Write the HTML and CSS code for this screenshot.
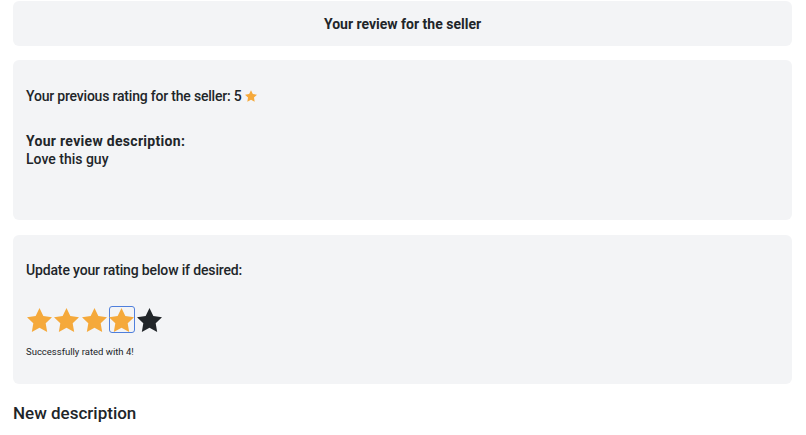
FILE: index.html
```html
<!DOCTYPE html>
<html>
<head>
<meta charset="utf-8">
<link rel="stylesheet" href="styles.css">
</head>
<body>
<div class="page">
  <div class="box header">Your review for the seller</div>
  <div class="box prev">
    <p class="prev-rating">Your previous rating for the seller: 5 <svg class="mini-star" viewBox="1.9 1.8 20.2 19.3"><path d="M12 1.8l3.1 6.4 7 1-5.1 4.9 1.2 7L12 17.8l-6.2 3.3 1.2-7L1.9 9.2l7-1z"/></svg></p>
    <p class="desc-label">Your review description:</p>
    <p class="desc-text">Love this guy</p>
  </div>
  <div class="box update">
    <p class="update-label">Update your rating below if desired:</p>
    <div class="stars">
      <button class="star on"><svg viewBox="1.9 1.8 20.2 19.3"><path d="M12 1.8l3.1 6.4 7 1-5.1 4.9 1.2 7L12 17.8l-6.2 3.3 1.2-7L1.9 9.2l7-1z"/></svg></button>
      <button class="star on"><svg viewBox="1.9 1.8 20.2 19.3"><path d="M12 1.8l3.1 6.4 7 1-5.1 4.9 1.2 7L12 17.8l-6.2 3.3 1.2-7L1.9 9.2l7-1z"/></svg></button>
      <button class="star on"><svg viewBox="1.9 1.8 20.2 19.3"><path d="M12 1.8l3.1 6.4 7 1-5.1 4.9 1.2 7L12 17.8l-6.2 3.3 1.2-7L1.9 9.2l7-1z"/></svg></button>
      <button class="star on focused"><svg viewBox="1.9 1.8 20.2 19.3"><path d="M12 1.8l3.1 6.4 7 1-5.1 4.9 1.2 7L12 17.8l-6.2 3.3 1.2-7L1.9 9.2l7-1z"/></svg></button>
      <button class="star off"><svg viewBox="1.9 1.8 20.2 19.3"><path d="M12 1.8l3.1 6.4 7 1-5.1 4.9 1.2 7L12 17.8l-6.2 3.3 1.2-7L1.9 9.2l7-1z"/></svg></button>
    </div>
    <p class="success">Successfully rated with 4!</p>
  </div>
  <h2 class="new-desc">New description</h2>
</div>
</body>
</html>
```

FILE: styles.css
```css
* { box-sizing: border-box; }
html, body { margin: 0; padding: 0; background: #fff; }
body {
  font-family: Roboto, "Noto Sans", "Liberation Sans", sans-serif;
  color: #212529;
}
.page {
  padding: 1px 14px 0 13px;
  display: flex;
  flex-direction: column;
}
.box {
  background: #f3f4f6;
  border-radius: 6px;
}
p { margin: 0; }
.header {
  height: 45px;
  display: flex;
  align-items: center;
  justify-content: center;
  font-size: 14px;
  font-weight: 700;
  padding-top: 1px;
}
.prev {
  margin-top: 14px;
  height: 160px;
  padding: 24px 13px;
}
.prev-rating {
  font-size: 14px;
  font-weight: 500;
  line-height: 24px;
  letter-spacing: -0.2px;
}
.mini-star {
  width: 12px;
  height: 12px;
  fill: #f5a93b;
  vertical-align: -1px;
}
.desc-label {
  margin-top: 24px;
  font-size: 14px;
  font-weight: 700;
  line-height: 18px;
  letter-spacing: 0.3px;
}
.desc-text {
  font-size: 14px;
  font-weight: 500;
  line-height: 18px;
}
.update {
  margin-top: 15px;
  height: 149px;
  padding: 23px 13px;
}
.update-label {
  font-size: 14px;
  font-weight: 500;
  line-height: 24px;
  letter-spacing: -0.15px;
}
.stars {
  margin-top: 24px;
  display: flex;
  gap: 1.5px;
  height: 27px;
}
.star {
  width: 26px;
  height: 27px;
  padding: 0;
  margin: 0;
  border: 1px solid transparent;
  border-radius: 3px;
  background: none;
  display: flex;
  align-items: center;
  justify-content: center;
}
.star svg { width: 25px; height: 24px; flex: none; }
.star.on svg { fill: #f5a93b; }
.star.off svg { fill: #212529; }
.star.focused { border-color: #4f7fdc; }
.success {
  margin-top: 12px;
  font-size: 9.5px;
  line-height: 14px;
}
.new-desc {
  margin: 19px 0 0;
  font-size: 17px;
  font-weight: 500;
  line-height: 20px;
}
```
